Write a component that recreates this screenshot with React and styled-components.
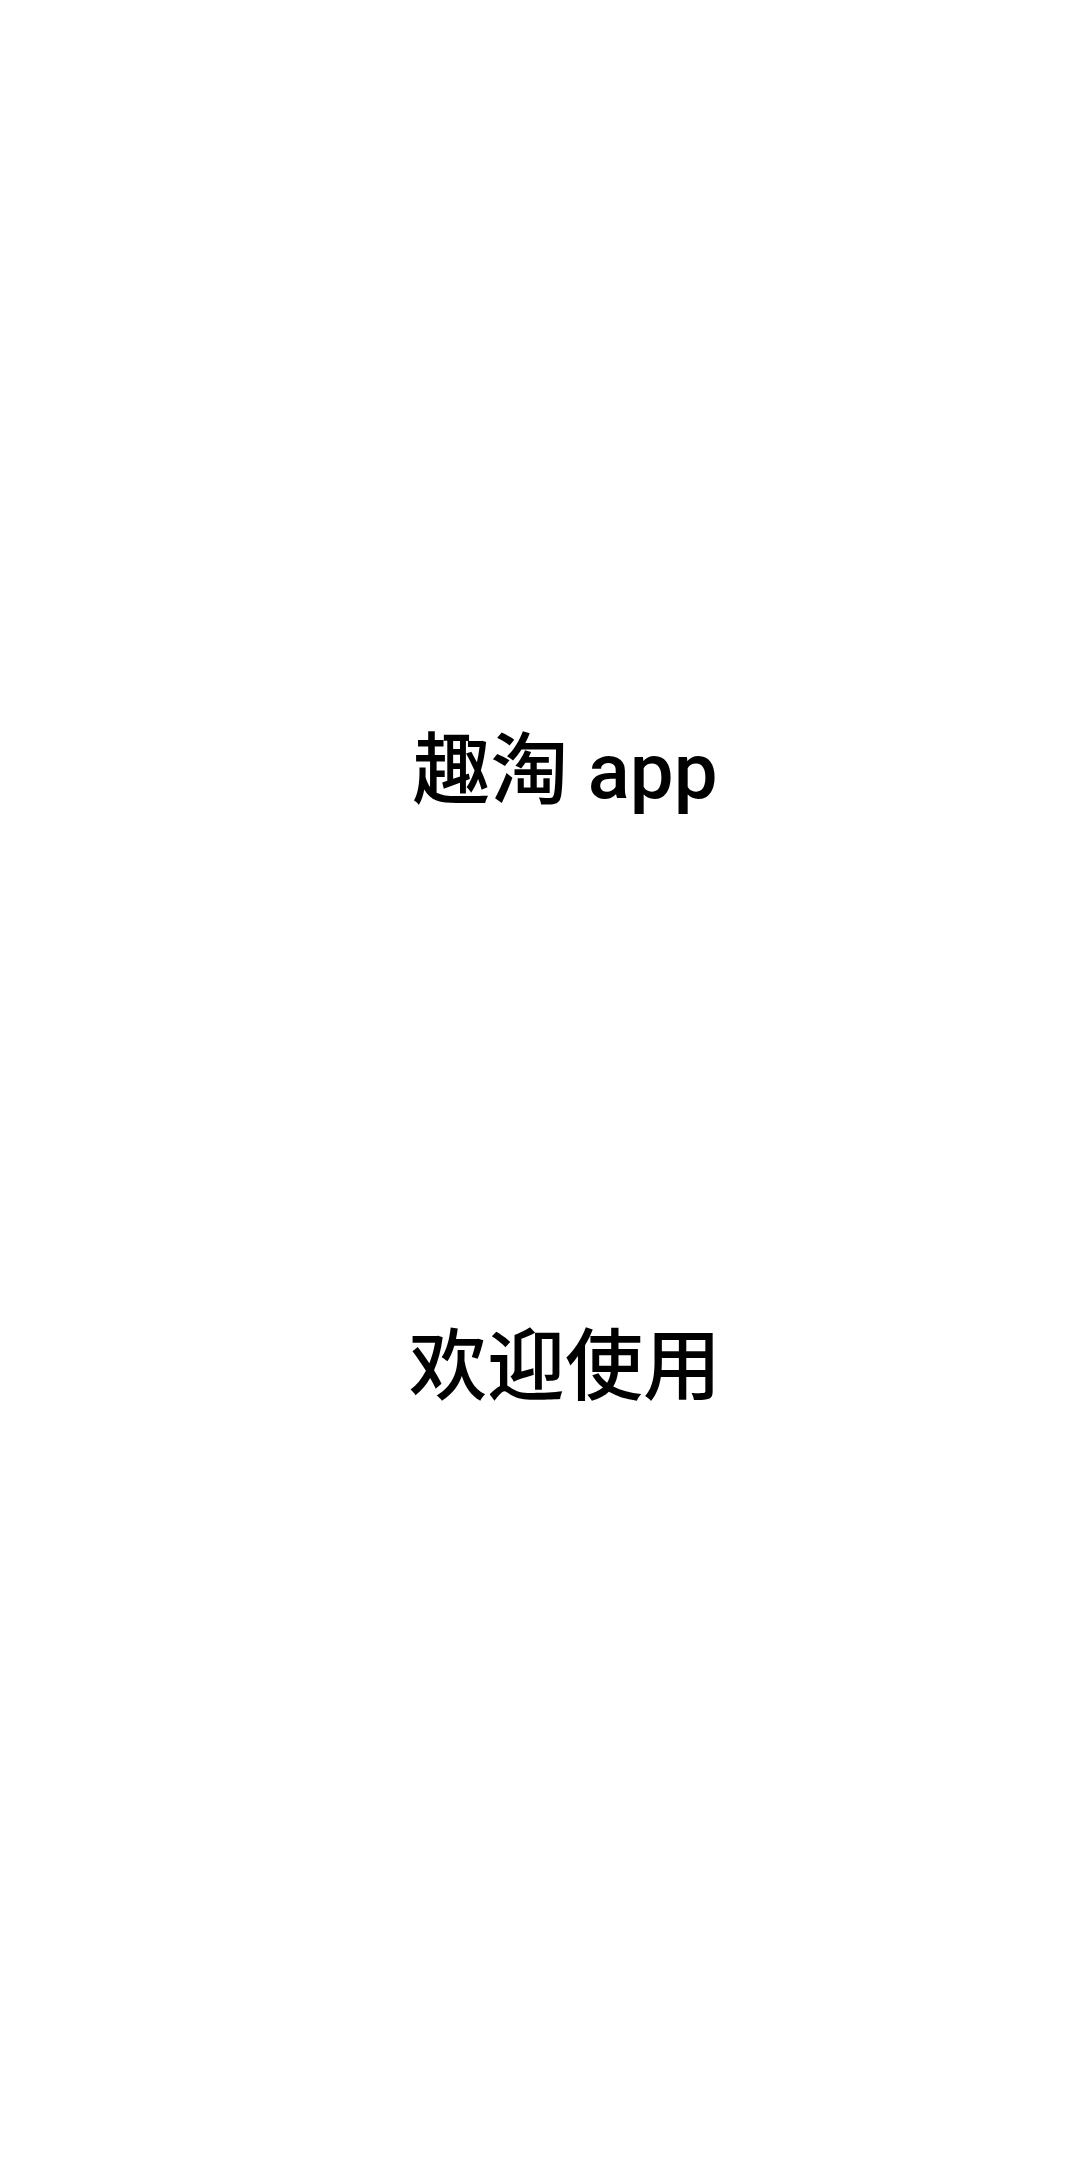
import React from "react";
import styled, { createGlobalStyle } from "styled-components";

const GlobalStyle = createGlobalStyle`
	* {
		margin: 0;
		padding: 0;
		box-sizing: border-box;
	}
	body {
		background: #ffffff;
		font-family: Roboto, "Noto Sans CJK SC", sans-serif;
	}
`;

const Screen = styled.main`
	height: 2160px;
	display: flex;
	flex-direction: column;
	align-items: center;
	padding: 725px 0 0 50px;
	gap: 502px;
	background: #ffffff;
`;

const Line = styled.h1`
	font-size: 78px;
	line-height: 1.2;
	font-weight: 500;
	color: #000000;
	white-space: nowrap;
`;

const App = () => (
	<>
		<GlobalStyle />
		<Screen>
			<Line>趣淘 app</Line>
			<Line>欢迎使用</Line>
		</Screen>
	</>
);

export default App;
